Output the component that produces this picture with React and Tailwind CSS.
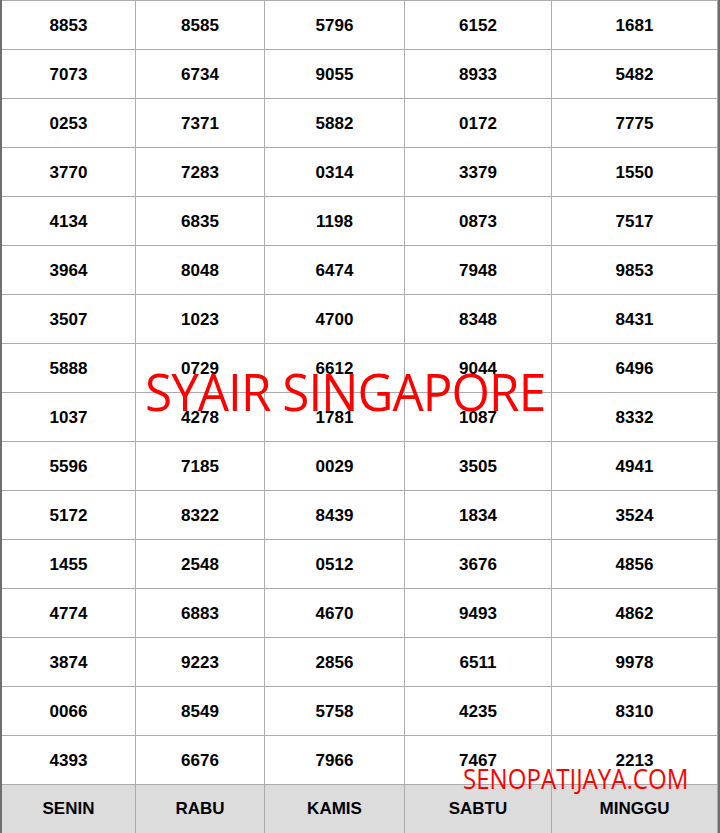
import React from "react";

const rows = [
  ["8853", "8585", "5796", "6152", "1681"],
  ["7073", "6734", "9055", "8933", "5482"],
  ["0253", "7371", "5882", "0172", "7775"],
  ["3770", "7283", "0314", "3379", "1550"],
  ["4134", "6835", "1198", "0873", "7517"],
  ["3964", "8048", "6474", "7948", "9853"],
  ["3507", "1023", "4700", "8348", "8431"],
  ["5888", "0729", "6612", "9044", "6496"],
  ["1037", "4278", "1781", "1087", "8332"],
  ["5596", "7185", "0029", "3505", "4941"],
  ["5172", "8322", "8439", "1834", "3524"],
  ["1455", "2548", "0512", "3676", "4856"],
  ["4774", "6883", "4670", "9493", "4862"],
  ["3874", "9223", "2856", "6511", "9978"],
  ["0066", "8549", "5758", "4235", "8310"],
  ["4393", "6676", "7966", "7467", "2213"],
];

const head = ["SENIN", "RABU", "KAMIS", "SABTU", "MINGGU"];

function Row({ cells, header }) {
  return (
    <div
      className={
        "grid grid-cols-[133px_129px_140px_147px_167px] h-[49px] border-t border-[#ababab] " +
        (header ? "bg-[#dcdcdc]" : "bg-white")
      }
    >
      {cells.map((c, i) => (
        <div
          key={i}
          className={
            "flex items-center justify-center text-[17px] font-bold text-black border-[#ababab] " +
            (header ? "" : "pt-[2px] ") +
            (i > 0 ? "border-l " : "") +
            (i === 4 ? "border-r" : "")
          }
        >
          {c}
        </div>
      ))}
    </div>
  );
}

export default function App() {
  return (
    <div className="relative w-[720px] h-[833px] overflow-hidden bg-white border-x-2 border-[#6e6e6e] font-['Liberation_Sans',Arial,sans-serif]">
      {rows.map((r, i) => (
        <Row key={i} cells={r} />
      ))}
      <Row cells={head} header />
      <div className="absolute left-[143px] top-[365px] origin-left scale-x-[0.95] text-[#ff0000] text-[52px] leading-none whitespace-nowrap tracking-[-1px] font-['Open_Sans',sans-serif]">
        SYAIR SINGAPORE
      </div>
      <div className="absolute left-[461px] top-[764px] origin-left scale-x-[0.86] text-[#ff0000] text-[28px] leading-none whitespace-nowrap font-['Open_Sans',sans-serif]">
        SENOPATIJAYA.COM
      </div>
    </div>
  );
}
